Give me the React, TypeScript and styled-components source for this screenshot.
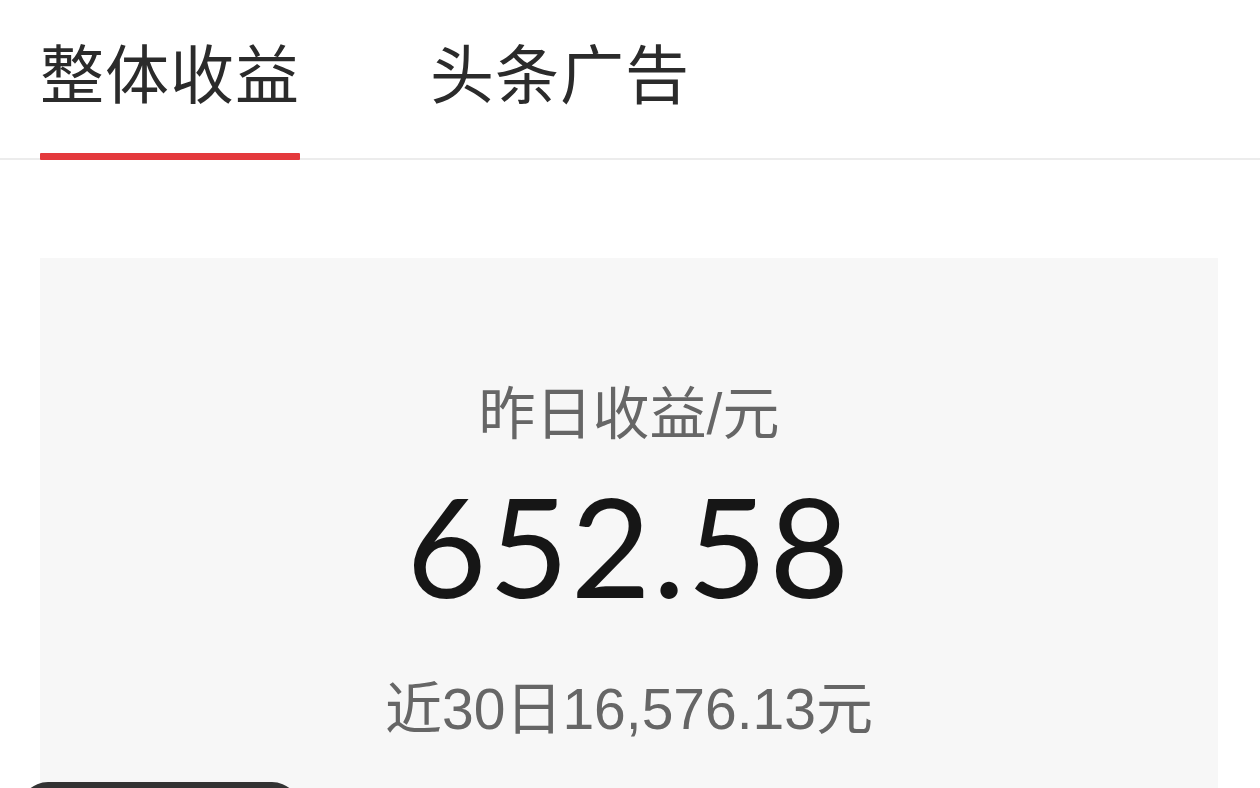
import styled, { createGlobalStyle } from "styled-components";

const GlobalStyle = createGlobalStyle`
  html, body {
    margin: 0;
    padding: 0;
    background: #ffffff;
    font-family: "Liberation Sans", "Noto Sans CJK SC", sans-serif;
    overflow: hidden;
  }
`;

const Page = styled.div`
  position: relative;
  width: 1260px;
  height: 788px;
  overflow: hidden;
  background: #ffffff;
`;

const TabBar = styled.div`
  display: flex;
  gap: 130px;
  padding: 0 40px;
  height: 158px;
  border-bottom: 2px solid #ececec;
  box-sizing: content-box;
`;

const Tab = styled.div<{ active?: boolean }>`
  position: relative;
  display: flex;
  align-items: flex-start;
  padding-top: 26px;
  font-family: "Noto Sans CJK SC", sans-serif;
  font-size: 64px;
  line-height: 88px;
  letter-spacing: 1px;
  color: #2b2b2b;
  &::after {
    content: "";
    display: ${(p) => (p.active ? "block" : "none")};
    position: absolute;
    left: 0;
    right: 0;
    bottom: -2px;
    height: 7px;
    background: #e4393c;
    border-radius: 1px;
  }
`;

const Card = styled.div`
  margin: 98px 42px 0 40px;
  background: #f7f7f7;
  height: 600px;
  display: flex;
  flex-direction: column;
  align-items: center;
  padding-top: 124px;
  box-sizing: border-box;
`;

const Label = styled.div`
  font-family: "Liberation Sans", "Noto Sans CJK SC", sans-serif;
  font-size: 57px;
  line-height: 64px;
  color: #666666;
`;

const Amount = styled.div`
  font-family: Lato, Roboto, "Liberation Sans", sans-serif;
  font-size: 138px;
  line-height: 150px;
  margin-top: 24px;
  letter-spacing: 2px;
  color: #161616;
`;

const Sub = styled.div`
  font-family: "Liberation Sans", "Noto Sans CJK SC", sans-serif;
  font-size: 57px;
  line-height: 64px;
  margin-top: 57px;
  color: #666666;
`;

const Toast = styled.div`
  position: absolute;
  left: 20px;
  top: 782px;
  width: 280px;
  height: 60px;
  border-radius: 28px;
  background: #333333;
`;

export default function App() {
  return (
    <Page>
      <GlobalStyle />
      <TabBar>
        <Tab active>整体收益</Tab>
        <Tab>头条广告</Tab>
      </TabBar>
      <Card>
        <Label>昨日收益/元</Label>
        <Amount>652.58</Amount>
        <Sub>近30日16,576.13元</Sub>
      </Card>
      <Toast />
    </Page>
  );
}
